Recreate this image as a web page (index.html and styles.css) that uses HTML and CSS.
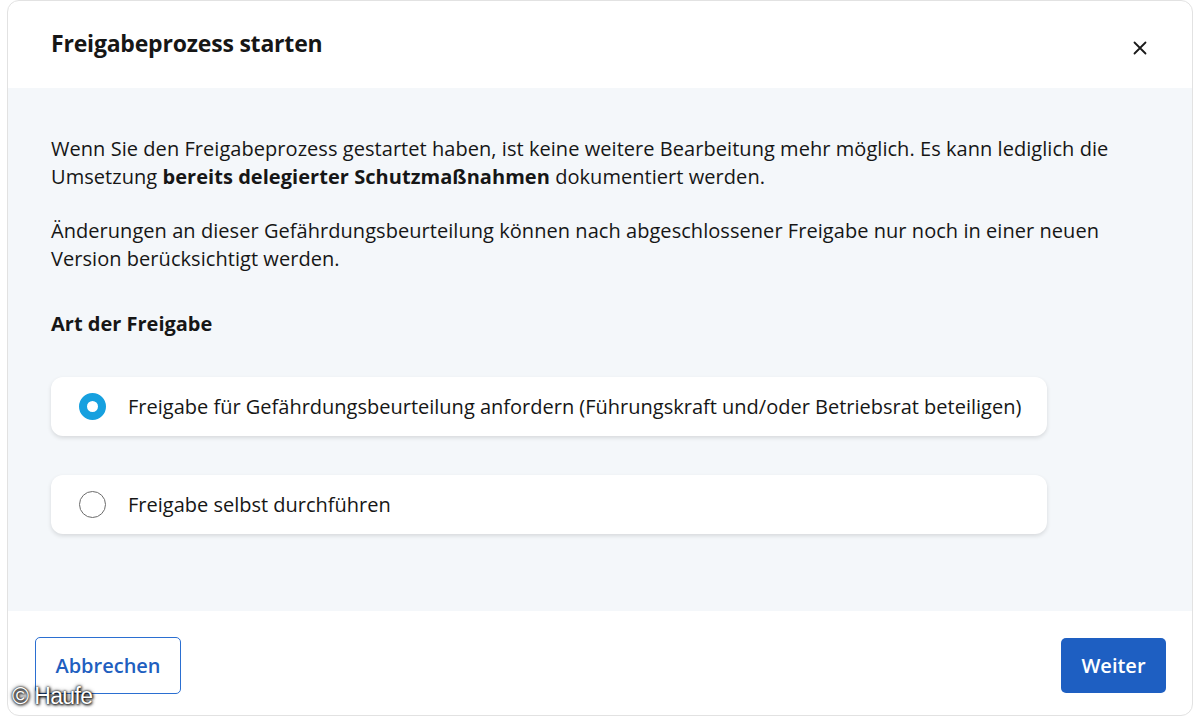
FILE: index.html
```html
<!DOCTYPE html>
<html lang="de">
<head>
<meta charset="utf-8">
<title>Freigabeprozess starten</title>
<link rel="stylesheet" href="styles.css">
</head>
<body>
<div class="dialog">
  <header class="dlg-head">
    <h1 class="dlg-title">Freigabeprozess starten</h1>
    <button class="close" aria-label="Schließen">
      <svg width="14" height="14" viewBox="0 0 14 14"><path d="M1.5 1.5 L12.5 12.5 M12.5 1.5 L1.5 12.5" stroke="#1a1a1a" stroke-width="1.8" stroke-linecap="round" fill="none"/></svg>
    </button>
  </header>
  <main class="dlg-body">
    <p class="para">Wenn Sie den Freigabeprozess gestartet haben, ist keine weitere Bearbeitung mehr möglich. Es kann lediglich die<br>Umsetzung <strong>bereits delegierter Schutzmaßnahmen</strong> dokumentiert werden.</p>
    <p class="para">Änderungen an dieser Gefährdungsbeurteilung können nach abgeschlossener Freigabe nur noch in einer neuen<br>Version berücksichtigt werden.</p>
    <h2 class="section">Art der Freigabe</h2>
    <div class="options">
      <label class="option">
        <span class="radio checked"></span>
        <span class="opt-text">Freigabe für Gefährdungsbeurteilung anfordern (Führungskraft und/oder Betriebsrat beteiligen)</span>
      </label>
      <label class="option">
        <span class="radio"></span>
        <span class="opt-text">Freigabe selbst durchführen</span>
      </label>
    </div>
  </main>
  <footer class="dlg-foot">
    <button class="btn btn-outline">Abbrechen</button>
    <button class="btn btn-primary">Weiter</button>
  </footer>
</div>
<div class="watermark">© Haufe</div>
</body>
</html>
```

FILE: styles.css
```css
html, body {
  margin: 0;
  padding: 0;
  background: #ffffff;
}
body {
  width: 1200px;
  height: 720px;
  overflow: hidden;
  font-family: "Open Sans", "Noto Sans", sans-serif;
  color: #161616;
}
.dialog {
  margin-left: 7px;
  width: 1186px;
  height: 716px;
  border: 1px solid #e2e2e2;
  border-radius: 12px;
  background: #fff;
  display: flex;
  flex-direction: column;
  box-sizing: border-box;
}
.dlg-head {
  height: 87px;
  display: flex;
  align-items: center;
  justify-content: space-between;
  padding: 0 45px 0 43px;
  flex-shrink: 0;
}
.dlg-title {
  margin: 0;
  font-size: 23px;
  font-weight: 700;
  letter-spacing: -0.2px;
  position: relative;
  top: -2px;
}
.close {
  border: 0;
  background: none;
  padding: 0;
  width: 14px;
  height: 14px;
  display: flex;
  position: relative;
  top: 3px;
}
.dlg-body {
  background: #f4f7fa;
  height: 523px;
  padding: 47px 43px 0 43px;
  box-sizing: border-box;
  flex-shrink: 0;
}
.para {
  margin: 0 0 26px 0;
  font-size: 20px;
  line-height: 28px;
  letter-spacing: 0.05px;
}
.para strong { font-weight: 700; }
.section {
  margin: 37px 0 0 0;
  font-size: 20px;
  line-height: 28px;
  font-weight: 700;
  letter-spacing: 0;
}
.options {
  margin-top: 39px;
  display: flex;
  flex-direction: column;
  gap: 39px;
  width: 996px;
}
.option {
  height: 59px;
  background: #fff;
  border-radius: 12px;
  box-shadow: 0 2px 4px rgba(0, 0, 0, 0.12);
  display: flex;
  align-items: center;
  padding-left: 28px;
  gap: 22px;
  box-sizing: border-box;
}
.radio {
  width: 27px;
  height: 27px;
  border-radius: 50%;
  border: 1.5px solid #6b6b6b;
  box-sizing: border-box;
  background: #fff;
  flex-shrink: 0;
}
.radio.checked {
  border: 8px solid #16a0df;
  background: #fff;
}
.opt-text {
  font-size: 20px;
  line-height: 28px;
  letter-spacing: 0;
}
.dlg-foot {
  flex: 1;
  display: flex;
  justify-content: space-between;
  align-items: flex-start;
  padding: 26px 26px 0 27px;
}
.btn {
  font-family: inherit;
  font-size: 20px;
  font-weight: 600;
  border-radius: 5px;
  box-sizing: border-box;
  cursor: pointer;
}
.btn-outline {
  height: 57px;
  width: 146px;
  background: #fff;
  border: 1.5px solid #2b6fd1;
  color: #1f5fc0;
}
.btn-primary {
  margin-top: 1px;
  height: 55px;
  width: 105px;
  background: #1e5fc2;
  border: 0;
  color: #fff;
}
.watermark {
  position: absolute;
  left: 12px;
  top: 683px;
  font-family: "Liberation Sans", Arial, sans-serif;
  font-size: 23px;
  color: #fff;
  letter-spacing: -0.6px;
  text-shadow: 0 0 2px #000, 0 0 4px rgba(0,0,0,0.8), 1px 1px 3px #000;
}
```
